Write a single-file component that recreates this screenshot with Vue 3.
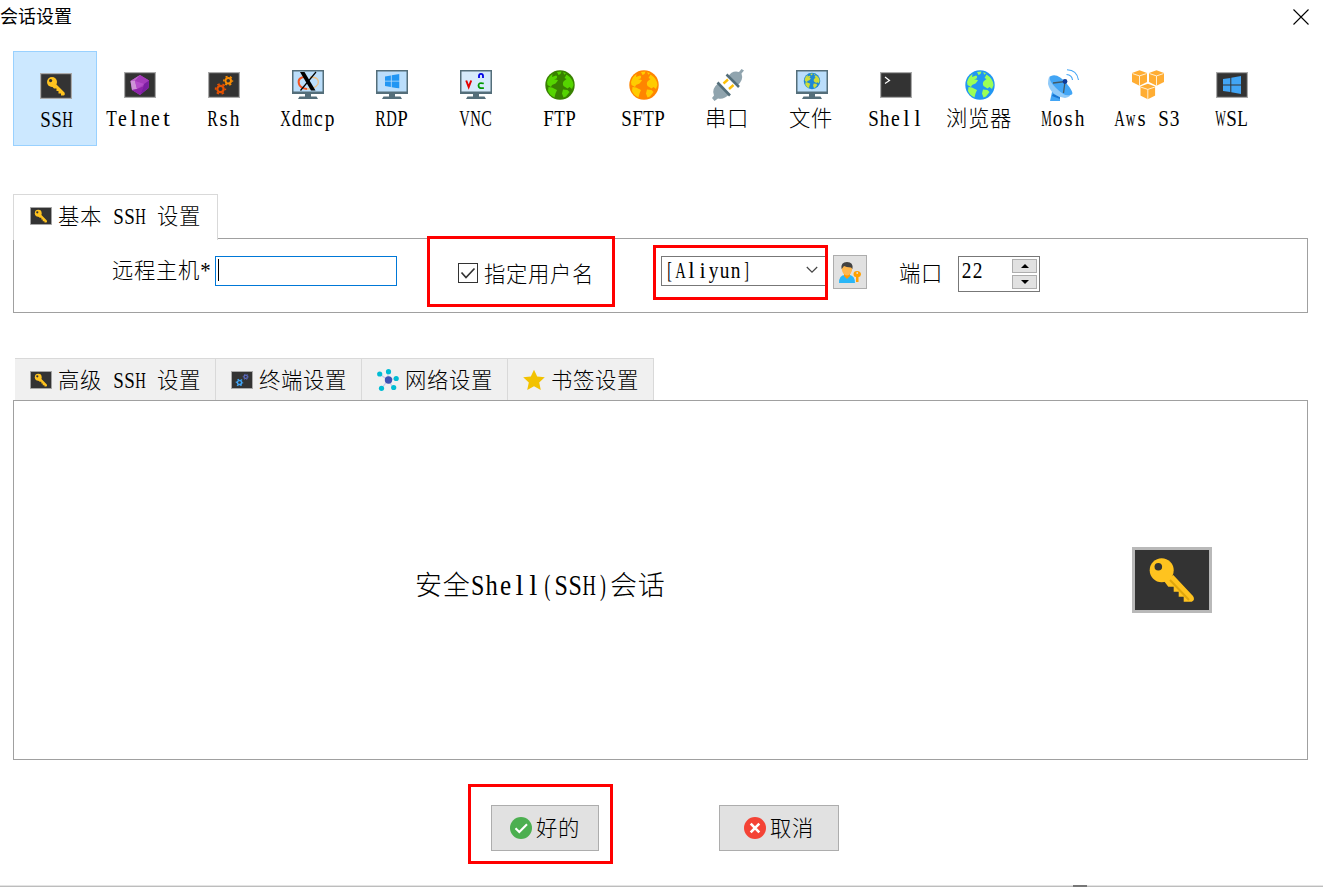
<script setup>
import { h } from 'vue'

// Fixed-pitch label: Latin characters take one cell, Chinese characters two.
// The text is laid out in a half-width coordinate space and each glyph is widened to its cell.
const NARROW = { l: 0.58, i: 0.56, '[': 0.42, ']': 0.42, '(': 0.42, ')': 0.42, '*': 0.95, r: 0.7, t: 0.62, e: 0.8, s: 0.74, c: 0.8 }
const Label = ({ text, cell = 11 }) => {
  const size = cell * 2.05
  const cjk = cell * 1.94
  let pos = 0
  const parts = []
  for (const ch of text) {
    const wide = ch.charCodeAt(0) > 255
    if (ch === ' ') {
      parts.push(' ')
    } else {
      const room = wide ? cell * 2 : cell
      const w = wide ? cjk : cell * (NARROW[ch] || (/[A-Z]/.test(ch) ? 0.96 : 0.88))
      const left = wide ? 0 : (room - w) / 2
      parts.push(h('tspan', {
        x: (pos + left) * 2,
        textLength: w * 2,
        lengthAdjust: 'spacingAndGlyphs',
        'font-size': wide ? cjk : size
      }, ch))
    }
    pos += wide ? cell * 2 : cell
  }
  return h('svg', { class: 'label', width: pos, height: cell * 2, role: 'img', 'aria-label': text }, [
    h('text', { y: cell * 1.74, transform: 'scale(.5 1)' }, parts)
  ])
}
Label.props = ['text', 'cell']

const sessions = [
  ['ssh', 'SSH'], ['telnet', 'Telnet'], ['rsh', 'Rsh'], ['xdmcp', 'Xdmcp'], ['rdp', 'RDP'],
  ['vnc', 'VNC'], ['ftp', 'FTP'], ['sftp', 'SFTP'], ['serial', '串口'], ['file', '文件'],
  ['shell', 'Shell'], ['browser', '浏览器'], ['mosh', 'Mosh'], ['aws', 'Aws S3'], ['wsl', 'WSL']
]
</script>

<template>
  <div class="dialog">
    <svg class="defs" width="0" height="0">
      <symbol id="key" viewBox="0 0 80 66">
        <rect x="1.5" y="1.5" width="77" height="63" fill="#333" stroke="#b9b9b9" stroke-width="3" />
        <path d="M41.3 28 61 49Q63.500 53 59.700 54.700H51.700V49.700H46.700V44.700H41.700V39.700H36.300L32 34Z" fill="#ffc31f" />
        <path d="M38 33 57 53" stroke="#e0a60c" stroke-width="2" />
        <circle cx="29.700" cy="23.300" r="12" fill="#ffc31f" />
        <circle cx="26.300" cy="19.700" r="3.800" fill="#333" />
      </symbol>
      <symbol id="key-small" viewBox="0 0 32 26">
        <rect x=".6" y=".6" width="30.800" height="24.800" fill="#333" stroke="#aaa" stroke-width="1.200" />
        <path d="M14.500 9.500 24.500 19.500Q25.500 22 23.500 22.500H21V20.500H18.500V18H16.500V15.500H14L11.500 13Z" fill="#ffc31f" />
        <circle cx="12" cy="9" r="5" fill="#ffc31f" />
        <circle cx="10.600" cy="7.600" r="1.600" fill="#333" />
      </symbol>
      <symbol id="term" viewBox="0 0 32 32">
        <rect x=".6" y="3.600" width="30.800" height="24.800" fill="#333" stroke="#aaa" stroke-width="1.200" />
      </symbol>
      <symbol id="monitor" viewBox="0 0 32 32">
        <path d="M0 1H32V25H0Z" fill="#546e7a" />
        <path d="M1.500 2.500H30.500V22.500H1.500Z" fill="currentColor" />
        <path d="M13 25H19V27.500H24.500L26 30H6L7.500 27.500H13Z" fill="#546e7a" />
      </symbol>
      <symbol id="globe" viewBox="0 0 32 32">
        <circle cx="16" cy="16" r="14.700" fill="var(--sea)" />
        <g fill="currentColor">
          <path d="M3 13Q4.500 7.500 8.500 5L8 8 12 6.500Q14 7.500 12.500 9.500L10 10.500Q13 10 14 11.500L11.500 14.500 8 16 7 18 3.500 16Z" />
          <path d="M4.500 18 8 18.500 13 21 11.500 24.500 10.500 28.500Q6 26.500 4 22Z" />
          <path d="M13 3 17.500 2.500 16.500 5 14.500 6ZM19 3.200 22 4 20.500 5.800Z" />
          <path d="M22.500 5.500Q29 9.500 29.500 16L28 20 25.500 18 23.500 19.500 19.500 17Q18 14 20 12L22.500 10 20.500 9Z" />
          <path d="M19 20.500 23.500 21 25.500 23 22 27.500 19.500 28.500 18 24.500Z" />
        </g>
      </symbol>
      <symbol id="gear" viewBox="0 0 16 16">
        <circle cx="8" cy="8" r="4.200" fill="none" stroke="currentColor" stroke-width="3" />
        <circle cx="8" cy="8" r="6.600" fill="none" stroke="currentColor" stroke-width="2.400" stroke-dasharray="3.200 3.711" stroke-dashoffset="1.600" />
      </symbol>
      <symbol id="windows" viewBox="0 0 18 18">
        <path d="M0 3 7.300 1.900V8.400H0ZM8.300 1.700 18 0V8.400H8.300ZM0 9.400H7.300V16L0 15ZM8.300 9.400H18V18L8.300 16.300Z" fill="currentColor" />
      </symbol>
      <symbol id="cube" viewBox="0 0 16 17">
        <path d="M8 0 16 3V12.500L8 16.500 0 12.500V3Z" fill="#ffad33" />
        <path d="M.5 3.500 8 6 15.500 3.500M8 6V16.500" fill="none" stroke="#fff3dd" stroke-width="1" />
      </symbol>
    </svg>

    <header class="titlebar">
      <span class="title">会话设置</span>
      <svg class="close" width="16" height="16" viewBox="0 0 16 16"><path d="M.5.5 15.500 15.500M15.500.5.5 15.500" stroke="#000" stroke-width="1.100" /></svg>
    </header>

    <nav class="sessions">
      <div v-for="[id, name] in sessions" :key="id" class="session" :class="{ active: id === 'ssh' }">
        <svg class="icon" width="32" height="32" viewBox="0 0 32 32">
          <use v-if="id === 'ssh'" href="#key-small" y="3" width="32" height="26" />
          <template v-else-if="id === 'telnet'">
            <use href="#term" />
            <path d="M16 6 25 11.500 24.500 19 16 26 8 21 6.500 12Z" fill="#ab47bc" />
            <path d="M16 6 11 12 6.500 12Z" fill="#ba68c8" /><path d="M6.500 12H11L13 20 8 21Z" fill="#ce93d8" />
            <path d="M16 6 25 11.500 20 15 11 12Z" fill="#a53bbb" /><path d="M25 11.500 24.500 19 16 26 20 15Z" fill="#7b1fa2" />
            <path d="M11 12 20 15 13 20Z" fill="#b74dcc" /><path d="M13 20 20 17 16 26 8 21Z" fill="#8e24aa" />
          </template>
          <template v-else-if="id === 'rsh'">
            <use href="#term" />
            <use href="#gear" class="amber" x="15" y="6.500" width="10.500" height="10.500" />
            <use href="#gear" class="rust" x="6.500" y="14" width="12" height="12" />
          </template>
          <template v-else-if="id === 'xdmcp'">
            <use href="#monitor" class="sky" />
            <path d="M14 8Q5 8 7 15Q8 19 15 20" fill="none" stroke="#f4511e" stroke-width="2" />
            <path d="M18 8Q28 8 26 15Q23 20 15 20" fill="none" stroke="#eebf85" stroke-width="1.300" />
            <path d="M8 3H12.500L23.500 21.500H19Z" /><path d="M24 3 8.500 21.500" stroke="#000" stroke-width="1.200" />
          </template>
          <template v-else-if="id === 'rdp'">
            <use href="#monitor" class="sky" /><use href="#windows" class="blue" x="9" y="5" width="14.500" height="14.500" />
          </template>
          <template v-else-if="id === 'vnc'">
            <use href="#monitor" class="pale" />
            <path d="M6.200 11.500 8.700 18 11.200 11.500" fill="none" stroke="#e50000" stroke-width="2" />
            <path d="M19 9V6.800Q19 4.800 21 4.800T23 6.800V9" fill="none" stroke="#0000e5" stroke-width="1.800" />
            <path d="M23.800 14.500Q18.500 13 18.500 16.500T23.800 19" fill="none" stroke="#009a00" stroke-width="1.800" />
          </template>
          <use v-else-if="id === 'ftp'" href="#globe" class="globe-green" />
          <use v-else-if="id === 'sftp'" href="#globe" class="globe-orange" />
          <template v-else-if="id === 'serial'">
            <path d="M11.500 14.500 16 10.500M17 20 21.500 16" stroke="#ffc107" stroke-width="2.400" />
            <path d="M16 8Q20 1 27 3L29.500 0 32 1.500 29.500 4.500Q32 11 25 17Z" fill="#90a4ae" />
            <path d="M6.500 14Q-1 20 2 26.500L0 29 2.500 32 6 29.500Q12 31 17.500 25Z" fill="#90a4ae" />
            <path d="M14.500 5.500 27 18M5.500 13.500 18 26.500" stroke="#546e7a" stroke-width="2.600" />
          </template>
          <template v-else-if="id === 'file'">
            <use href="#monitor" class="sky" /><use href="#globe" class="globe-file" x="7" y="3" width="18" height="18" />
          </template>
          <template v-else-if="id === 'shell'">
            <use href="#term" /><path d="M5 8 9.500 11.500 5 14.500" fill="none" stroke="#fff" stroke-width="1.200" />
          </template>
          <use v-else-if="id === 'browser'" href="#globe" class="globe-blue" />
          <template v-else-if="id === 'mosh'">
            <path d="M4 23H8L12 28V32H2Z" fill="#42a5f5" /><path d="M5 25 12 28V30L4 27Z" fill="#1976d2" />
            <path d="M2 7Q11 7 23 24Q23 28 17 29Q3 27 0 15 0 9 2 7Z" fill="#90caf9" />
            <path d="M3 7Q10 4 19 15T22 26Q17 28 8 19T3 7Z" fill="#42a5f5" />
            <path d="M5 14 17 12.500 15.500 24" fill="none" stroke="#455a64" stroke-width="1.300" /><circle cx="17" cy="12.500" r="2.400" fill="#0d3c9b" />
            <path d="M18.500 5.500Q24 6 24.500 11M19 .7Q29 1 30.500 11" fill="none" stroke="#42a5f5" stroke-width="1.100" />
          </template>
          <template v-else-if="id === 'aws'">
            <use href="#cube" x="0" y="1" width="15" height="16.500" /><use href="#cube" x="17" y="1" width="15" height="16.500" />
            <use href="#cube" x="8.300" y="14.500" width="15" height="16.500" />
          </template>
          <template v-else>
            <use href="#term" /><use href="#windows" class="azure" x="7" y="7" width="18" height="18" />
          </template>
        </svg>
        <Label :text="name" />
      </div>
    </nav>

    <section class="basic">
      <div class="tab current">
        <svg width="22" height="18"><use href="#key-small" width="22" height="18" /></svg>
        <Label text="基本 SSH 设置" />
      </div>
      <div class="panel basic-panel">
        <Label class="host-label" text="远程主机*" />
        <div class="host"><i class="caret"></i></div>
        <svg class="check" width="20" height="20" viewBox="0 0 20 20">
          <rect x=".5" y=".5" width="19" height="19" fill="#fff" stroke="#333" />
          <path d="M3.500 9.500 8 14.500 16.500 5.500" fill="none" stroke="#333" stroke-width="1.700" />
        </svg>
        <Label class="user-label" text="指定用户名" />
        <div class="combo">
          <Label text="[Aliyun]" />
          <svg width="12" height="8" viewBox="0 0 12 8"><path d="M.8 1 6 6.200 11.200 1" fill="none" stroke="#444" stroke-width="1.200" /></svg>
        </div>
        <div class="user-button">
          <svg width="24" height="24" viewBox="0 0 24 24">
            <path d="M1 23Q1 15 7 15H12Q17 16 17 23Z" fill="#29b6f6" />
            <path d="M6 13H12V16L9 19 6 16Z" fill="#ff9800" /><ellipse cx="9" cy="9" rx="5.200" ry="6.500" fill="#ffb74d" />
            <path d="M3.500 9Q2.500 2 9 2T14.500 9L13 7.500Q8 7 6 6L4.500 8Z" fill="#424242" />
            <path d="M19 11Q23 11 23 14.500Q22.500 17 20.500 17V22H18V17Q15.500 17 15.500 14Q15.500 11 19 11Z" fill="#ffa000" /><circle cx="19.200" cy="13" r=".9" fill="#e1e1e1" />
          </svg>
        </div>
        <Label class="port-label" text="端口" />
        <div class="spinner">
          <Label text="22" />
          <div class="steps">
            <span><svg width="8" height="4" viewBox="0 0 8 4"><path d="M0 4 4 0 8 4Z" /></svg></span>
            <span><svg width="8" height="4" viewBox="0 0 8 4"><path d="M0 0 4 4 8 0Z" /></svg></span>
          </div>
        </div>
      </div>
    </section>

    <section class="advanced">
      <div class="tabs">
        <div class="tab first">
          <svg width="22" height="18"><use href="#key-small" width="22" height="18" /></svg>
          <Label text="高级 SSH 设置" />
        </div>
        <div class="tab">
          <svg width="22" height="18" viewBox="0 0 22 18">
            <rect x=".5" y=".5" width="21" height="17" fill="#333" stroke="#aaa" />
            <use href="#gear" class="indigo" x="11.500" y="2.500" width="6.500" height="6.500" /><use href="#gear" class="azure" x="4.500" y="7.500" width="8" height="8" />
          </svg>
          <Label text="终端设置" />
        </div>
        <div class="tab">
          <svg width="22" height="22" viewBox="0 0 22 22">
            <path d="M2.500 5 11 11 19 9.500M11 2.500V11L4.500 19.500M11 11 16.500 19" stroke="#c5cae9" stroke-width="1.200" fill="none" />
            <g fill="#00bcd4"><circle cx="2.700" cy="5" r="2.600" /><circle cx="11.500" cy="2.700" r="2.600" /><circle cx="19.200" cy="9.500" r="2.600" /><circle cx="4.500" cy="19.300" r="2.600" /><circle cx="16.700" cy="18.500" r="2.600" /></g>
            <circle cx="11.500" cy="11" r="3.700" fill="#3f51b5" />
          </svg>
          <Label text="网络设置" />
        </div>
        <div class="tab">
          <svg width="22" height="22" viewBox="0 0 22 22"><path d="M11 .8 14.200 7.500 21.800 8.200 16.200 13.500 17.800 21 11 17.200 4.200 21 5.800 13.500.2 8.200 7.800 7.500Z" fill="#f2c200" /></svg>
          <Label text="书签设置" />
        </div>
      </div>
      <div class="panel advanced-panel">
        <Label text="安全Shell(SSH)会话" :cell="13.93" />
        <svg width="80" height="66"><use href="#key" width="80" height="66" /></svg>
      </div>
    </section>

    <footer class="actions">
      <div class="button ok">
        <svg width="22" height="22" viewBox="0 0 22 22"><circle cx="11" cy="11" r="11" fill="#4caf50" /><path d="M5.500 11.300 9.300 15 17 7.300" fill="none" stroke="#fff" stroke-width="2.100" /></svg>
        <Label text="好的" />
      </div>
      <div class="button cancel">
        <svg width="22" height="22" viewBox="0 0 22 22"><circle cx="11" cy="11" r="11" fill="#f44336" /><path d="M6.700 6.700 15.300 15.300M15.300 6.700 6.700 15.300" stroke="#fff" stroke-width="2.600" /></svg>
        <Label text="取消" />
      </div>
    </footer>
    <div class="bottom-edge"><i></i></div>

    <i class="mark mark-user"></i>
    <i class="mark mark-combo"></i>
    <i class="mark mark-ok"></i>
  </div>
</template>

<style>
body { margin: 0; background: #fff; overflow: hidden; }
</style>

<style scoped>
.dialog { position: relative; width: 1323px; height: 887px; overflow: hidden; background: #fff; color: #000; display: flex; flex-direction: column; font-family: "Liberation Serif", "Noto Sans CJK SC", serif; font-weight: 300; }
svg { display: block; flex: none; }
.defs { position: absolute; }
.label { overflow: visible; flex: none; }
.titlebar { height: 51px; flex: none; display: flex; justify-content: space-between; align-items: flex-start; }
.title { font: 400 18px/31px "Noto Sans CJK SC", sans-serif; }
.close { margin: 8.500px 14.500px 0 0; }
.sessions { display: flex; margin-left: 13px; height: 95px; flex: none; }
.session { box-sizing: border-box; width: 84px; height: 95px; display: flex; flex-direction: column; align-items: center; padding-top: 18px; }
.icon { margin-left: 2px; margin-bottom: 6px; overflow: visible; }
.session.active { background: #cce8ff; border: 1px solid #99d1ff; padding: 18px 0 0 2px; }
.session.active .icon { margin-left: 0; }
.sky { color: #bbdefb; }
.pale { color: #d6eafb; }
.blue { color: #2196f3; }
.azure { color: #42a5f5; }
.indigo { color: #5c6bc0; }
.amber { color: #fb8c00; }
.rust { color: #e65100; }
.globe-green { --sea: #388100; color: #55d400; }
.globe-orange { --sea: #ff8500; color: #ffcc00; }
.globe-blue { --sea: #2196f3; color: #9bff57; }
.globe-file { --sea: #1e88d5; color: #cddc39; }
.basic { margin: 48px 15px 0 13px; height: 119px; flex: none; }
.panel { box-sizing: border-box; border: 1px solid #a0a0a0; display: flex; }
.tab { box-sizing: border-box; display: flex; align-items: center; gap: 6px; }
.tab.current { position: relative; width: 205px; height: 46px; padding: 0 0 3px 16px; border: 1px solid #d9d9d9; border-bottom: 0; background: #fff; }
.basic-panel { height: 75px; margin-top: -2px; align-items: flex-start; }
.host-label { margin: 20px 0 0 98px; }
.host { box-sizing: border-box; width: 182px; height: 30px; margin: 17px 0 0 4px; padding: 2px; border: 1px solid #0078d7; }
.caret { display: block; width: 1px; height: 22px; background: #000; }
.check { margin: 24px 0 0 61px; }
.user-label { margin: 24px 0 0 6px; }
.combo { box-sizing: border-box; display: flex; justify-content: space-between; align-items: center; width: 166px; height: 30px; margin: 17px 0 0 67px; padding: 0 8px 2px 2px; border: 1px solid #777; }
.user-button { box-sizing: border-box; width: 34px; height: 34px; margin: 16px 0 0 6px; padding: 4px; background: #e1e1e1; border: 1px solid #adadad; }
.port-label { margin: 23px 0 0 32px; }
.spinner { box-sizing: border-box; display: flex; justify-content: space-between; width: 82px; height: 36px; margin: 17px 0 0 15px; padding: 2px 2px 2px 2px; border: 1px solid #777; }
.steps { display: flex; flex-direction: column; gap: 2px; }
.steps span { box-sizing: border-box; width: 25px; height: 14px; display: flex; align-items: center; justify-content: center; background: #e1e1e1; border: 1px solid #adadad; }
.advanced { margin: 45px 15px 0 13px; height: 402px; flex: none; }
.tabs { display: flex; height: 42px; margin-left: 2px; }
.tabs .tab { width: 146px; padding-left: 15px; background: #f0f0f0; border-top: 1px solid #d9d9d9; border-right: 1px solid #d9d9d9; }
.tabs .tab.first { width: 201px; }
.advanced-panel { height: 360px; align-items: center; justify-content: space-between; padding: 0 95px 0 401px; }
.advanced-panel > .label { margin-top: 10px; }
.actions { display: flex; gap: 120px; margin: 45px 0 0 491px; height: 46px; flex: none; }
.button { box-sizing: border-box; height: 46px; display: flex; align-items: center; gap: 4px; background: #e1e1e1; border: 1px solid #adadad; }
.ok { width: 108px; padding-left: 18px; }
.cancel { width: 120px; padding-left: 24px; }
.bottom-edge { height: 2px; margin-top: 34px; background: linear-gradient(#e4e4e4 50%, #bdbdbd 50%); }
.bottom-edge i { display: block; width: 14px; height: 2px; margin-left: 1073px; background: #777; }
.mark { position: absolute; box-sizing: border-box; border: 3px solid #f00; }
.mark-user { left: 427px; top: 236px; width: 188px; height: 71px; }
.mark-combo { left: 653px; top: 245px; width: 175px; height: 55px; }
.mark-ok { left: 468px; top: 784px; width: 145px; height: 80px; }
</style>
